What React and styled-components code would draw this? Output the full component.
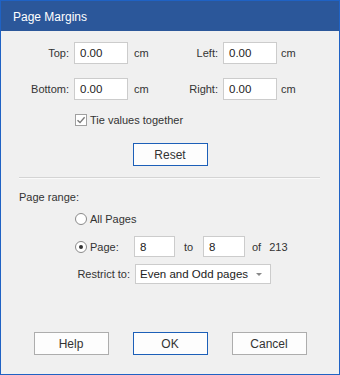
import styled, { createGlobalStyle } from 'styled-components';

const GlobalStyle = createGlobalStyle`
	html, body {
		margin: 0;
		padding: 0;
		background: #ffffff;
	}
	body {
		font-family: "Liberation Sans", Arial, sans-serif;
		font-size: 11px;
		color: #333333;
	}
`;

const Window = styled.div`
	width: 340px;
	height: 375px;
	box-sizing: border-box;
	border: 1px solid #1f62c4;
	display: flex;
	flex-direction: column;
	background: #f0f0f0;
`;

const TitleBar = styled.div`
	height: 30px;
	background: #2b579a;
	color: #ffffff;
	font-size: 12px;
	display: flex;
	align-items: center;
	padding-left: 12px;
	padding-top: 1px;
	box-sizing: border-box;
`;

const Body = styled.div`
	flex: 1;
	display: flex;
	flex-direction: column;
`;

const MarginGrid = styled.div`
	display: grid;
	grid-template-columns: 60px 54px 50px 45px 54px auto;
	grid-auto-rows: 22px;
	row-gap: 14px;
	margin: 11px 0 0 13px;
	align-items: center;
`;

const Label = styled.span`
	text-align: right;
	padding-right: 5px;
	white-space: nowrap;
`;

const Unit = styled.span`
	padding-left: ${({ $pl }) => $pl ?? 6}px;
`;

const TextBox = styled.div`
	box-sizing: border-box;
	width: ${({ $w }) => $w || 54}px;
	height: ${({ $h }) => $h || 22}px;
	background: #ffffff;
	border: 1px solid #cccccc;
	display: flex;
	align-items: center;
	padding-left: 5px;
	font-size: 11.5px;
	color: #222;
`;

const CheckRow = styled.label`
	display: flex;
	align-items: center;
	gap: 3px;
	margin: 14px 0 0 74px;
	height: 12px;
`;

const CheckBox = styled.span`
	width: 12px;
	height: 12px;
	box-sizing: border-box;
	border: 1px solid #a0a0a0;
	background: #ffffff;
	display: flex;
	align-items: center;
	justify-content: center;
`;

const Button = styled.div`
	box-sizing: border-box;
	width: 75px;
	height: 23px;
	border: 1px solid ${({ $primary }) => ($primary ? '#1c5fb8' : '#adadad')};
	background: #fdfdfd;
	display: flex;
	align-items: center;
	justify-content: center;
	font-size: 12px;
	color: #333;
`;

const CenterRow = styled.div`
	display: flex;
	justify-content: center;
	margin-top: 17px;
`;

const Separator = styled.div`
	margin: 11px 19px 0 18px;
	border-top: 1px solid #d4d4d4;
	border-bottom: 1px solid #fafafa;
`;

const SectionTitle = styled.div`
	margin: 11px 0 0 18px;
	height: 14px;
	line-height: 14px;
`;

const RangeRow = styled.div`
	display: flex;
	align-items: center;
	height: ${({ $h }) => $h || 20}px;
	margin-top: ${({ $mt }) => $mt || 0}px;
	padding-left: 74px;
`;

const Radio = styled.span`
	width: 12px;
	height: 12px;
	box-sizing: border-box;
	border-radius: 50%;
	border: 1px solid #8a8a8a;
	background: #ffffff;
	display: flex;
	align-items: center;
	justify-content: center;
	margin-right: 3px;
	&::after {
		content: '';
		width: 4px;
		height: 4px;
		border-radius: 50%;
		background: ${({ $checked }) => ($checked ? '#333' : 'transparent')};
	}
`;

const RadioText = styled.span`
	width: ${({ $w }) => ($w ? `${$w}px` : 'auto')};
`;

const Joiner = styled.span`
	width: 28px;
	padding-left: 9px;
	box-sizing: border-box;
`;

const RestrictLabel = styled.span`
	width: 60px;
	padding-right: 5px;
	box-sizing: border-box;
	text-align: right;
	white-space: nowrap;
`;

const Select = styled.div`
	box-sizing: border-box;
	width: 136px;
	height: 20px;
	border: 1px solid #cccccc;
	background: #ffffff;
	display: flex;
	align-items: center;
	justify-content: space-between;
	padding: 0 8px 0 4px;
	font-size: 11.5px;
	color: #222;
	&::after {
		content: '';
		border-left: 3px solid transparent;
		border-right: 3px solid transparent;
		border-top: 3px solid #888;
	}
`;

const Footer = styled.div`
	margin-top: auto;
	margin-bottom: 19px;
	display: flex;
	justify-content: center;
	gap: 24px;
`;

const Check = () => (
	<svg width="10" height="10" viewBox="0 0 10 10">
		<path d="M1.5 5.2 L4 7.6 L8.6 2.2" fill="none" stroke="#7a7a7a" strokeWidth="1.4" />
	</svg>
);

export default function App() {
	return (
		<>
			<GlobalStyle />
			<Window>
				<TitleBar>Page Margins</TitleBar>
				<Body>
					<MarginGrid>
						<Label>Top:</Label>
						<TextBox>0.00</TextBox>
						<Unit>cm</Unit>
						<Label>Left:</Label>
						<TextBox>0.00</TextBox>
						<Unit $pl={4}>cm</Unit>
						<Label>Bottom:</Label>
						<TextBox>0.00</TextBox>
						<Unit>cm</Unit>
						<Label>Right:</Label>
						<TextBox>0.00</TextBox>
						<Unit $pl={4}>cm</Unit>
					</MarginGrid>
					<CheckRow>
						<CheckBox>
							<Check />
						</CheckBox>
						Tie values together
					</CheckRow>
					<CenterRow>
						<Button $primary>Reset</Button>
					</CenterRow>
					<Separator />
					<SectionTitle>Page range:</SectionTitle>
					<RangeRow $mt={5}>
						<Radio />
						<RadioText>All Pages</RadioText>
					</RangeRow>
					<RangeRow $mt={7} $h={21}>
						<Radio $checked />
						<RadioText $w={44}>Page:</RadioText>
						<TextBox $w={41} $h={21}>8</TextBox>
						<Joiner>to</Joiner>
						<TextBox $w={42} $h={21}>8</TextBox>
						<Unit $pl={7}>of</Unit>
						<Unit $pl={8}>213</Unit>
					</RangeRow>
					<RangeRow $mt={7}>
						<RestrictLabel>Restrict to:</RestrictLabel>
						<Select>Even and Odd pages</Select>
					</RangeRow>
					<Footer>
						<Button>Help</Button>
						<Button $primary>OK</Button>
						<Button>Cancel</Button>
					</Footer>
				</Body>
			</Window>
		</>
	);
}
